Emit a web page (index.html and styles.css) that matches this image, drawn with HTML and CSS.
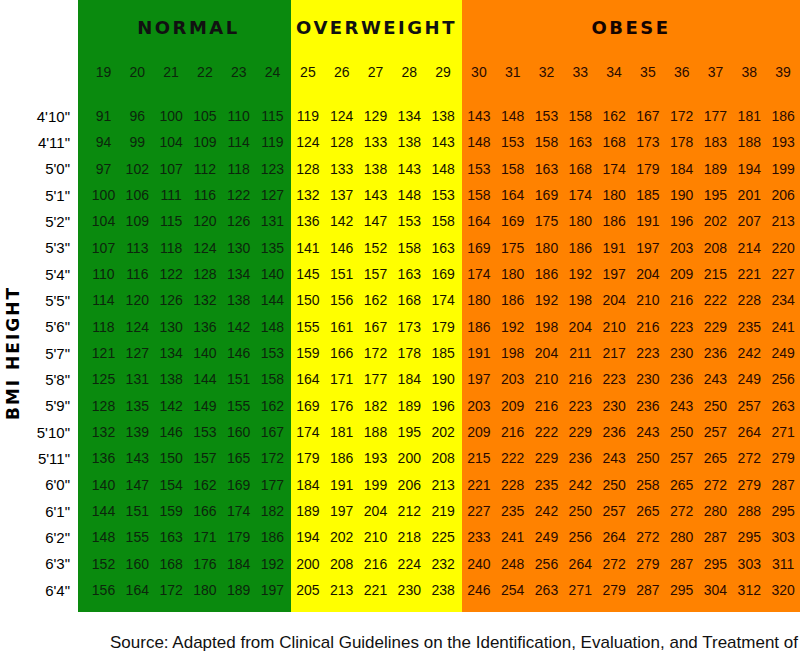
FILE: index.html
```html
<!DOCTYPE html>
<html>
<head>
<meta charset="utf-8">
<link rel="stylesheet" href="styles.css">
</head>
<body>
<div class="chart">
  <div class="side">
    <div class="side-head"></div>
    <div class="side-body">
      <div class="axis"><span>BMI HEIGHT</span></div>
      <div class="heights">
        <div>4'10"</div><div>4'11"</div><div>5'0"</div><div>5'1"</div><div>5'2"</div><div>5'3"</div>
        <div>5'4"</div><div>5'5"</div><div>5'6"</div><div>5'7"</div><div>5'8"</div><div>5'9"</div>
        <div>5'10"</div><div>5'11"</div><div>6'0"</div><div>6'1"</div><div>6'2"</div><div>6'3"</div>
        <div>6'4"</div>
      </div>
    </div>
  </div>

  <div class="block normal">
    <div class="title">NORMAL</div>
    <div class="grid bmi"><span>19</span><span>20</span><span>21</span><span>22</span><span>23</span><span>24</span></div>
    <div class="grid data">
      <span>91</span><span>96</span><span>100</span><span>105</span><span>110</span><span>115</span>
      <span>94</span><span>99</span><span>104</span><span>109</span><span>114</span><span>119</span>
      <span>97</span><span>102</span><span>107</span><span>112</span><span>118</span><span>123</span>
      <span>100</span><span>106</span><span>111</span><span>116</span><span>122</span><span>127</span>
      <span>104</span><span>109</span><span>115</span><span>120</span><span>126</span><span>131</span>
      <span>107</span><span>113</span><span>118</span><span>124</span><span>130</span><span>135</span>
      <span>110</span><span>116</span><span>122</span><span>128</span><span>134</span><span>140</span>
      <span>114</span><span>120</span><span>126</span><span>132</span><span>138</span><span>144</span>
      <span>118</span><span>124</span><span>130</span><span>136</span><span>142</span><span>148</span>
      <span>121</span><span>127</span><span>134</span><span>140</span><span>146</span><span>153</span>
      <span>125</span><span>131</span><span>138</span><span>144</span><span>151</span><span>158</span>
      <span>128</span><span>135</span><span>142</span><span>149</span><span>155</span><span>162</span>
      <span>132</span><span>139</span><span>146</span><span>153</span><span>160</span><span>167</span>
      <span>136</span><span>143</span><span>150</span><span>157</span><span>165</span><span>172</span>
      <span>140</span><span>147</span><span>154</span><span>162</span><span>169</span><span>177</span>
      <span>144</span><span>151</span><span>159</span><span>166</span><span>174</span><span>182</span>
      <span>148</span><span>155</span><span>163</span><span>171</span><span>179</span><span>186</span>
      <span>152</span><span>160</span><span>168</span><span>176</span><span>184</span><span>192</span>
      <span>156</span><span>164</span><span>172</span><span>180</span><span>189</span><span>197</span>
    </div>
  </div>

  <div class="block over">
    <div class="title">OVERWEIGHT</div>
    <div class="grid bmi"><span>25</span><span>26</span><span>27</span><span>28</span><span>29</span></div>
    <div class="grid data">
      <span>119</span><span>124</span><span>129</span><span>134</span><span>138</span>
      <span>124</span><span>128</span><span>133</span><span>138</span><span>143</span>
      <span>128</span><span>133</span><span>138</span><span>143</span><span>148</span>
      <span>132</span><span>137</span><span>143</span><span>148</span><span>153</span>
      <span>136</span><span>142</span><span>147</span><span>153</span><span>158</span>
      <span>141</span><span>146</span><span>152</span><span>158</span><span>163</span>
      <span>145</span><span>151</span><span>157</span><span>163</span><span>169</span>
      <span>150</span><span>156</span><span>162</span><span>168</span><span>174</span>
      <span>155</span><span>161</span><span>167</span><span>173</span><span>179</span>
      <span>159</span><span>166</span><span>172</span><span>178</span><span>185</span>
      <span>164</span><span>171</span><span>177</span><span>184</span><span>190</span>
      <span>169</span><span>176</span><span>182</span><span>189</span><span>196</span>
      <span>174</span><span>181</span><span>188</span><span>195</span><span>202</span>
      <span>179</span><span>186</span><span>193</span><span>200</span><span>208</span>
      <span>184</span><span>191</span><span>199</span><span>206</span><span>213</span>
      <span>189</span><span>197</span><span>204</span><span>212</span><span>219</span>
      <span>194</span><span>202</span><span>210</span><span>218</span><span>225</span>
      <span>200</span><span>208</span><span>216</span><span>224</span><span>232</span>
      <span>205</span><span>213</span><span>221</span><span>230</span><span>238</span>
    </div>
  </div>

  <div class="block obese">
    <div class="title">OBESE</div>
    <div class="grid bmi"><span>30</span><span>31</span><span>32</span><span>33</span><span>34</span><span>35</span><span>36</span><span>37</span><span>38</span><span>39</span></div>
    <div class="grid data">
      <span>143</span><span>148</span><span>153</span><span>158</span><span>162</span><span>167</span><span>172</span><span>177</span><span>181</span><span>186</span>
      <span>148</span><span>153</span><span>158</span><span>163</span><span>168</span><span>173</span><span>178</span><span>183</span><span>188</span><span>193</span>
      <span>153</span><span>158</span><span>163</span><span>168</span><span>174</span><span>179</span><span>184</span><span>189</span><span>194</span><span>199</span>
      <span>158</span><span>164</span><span>169</span><span>174</span><span>180</span><span>185</span><span>190</span><span>195</span><span>201</span><span>206</span>
      <span>164</span><span>169</span><span>175</span><span>180</span><span>186</span><span>191</span><span>196</span><span>202</span><span>207</span><span>213</span>
      <span>169</span><span>175</span><span>180</span><span>186</span><span>191</span><span>197</span><span>203</span><span>208</span><span>214</span><span>220</span>
      <span>174</span><span>180</span><span>186</span><span>192</span><span>197</span><span>204</span><span>209</span><span>215</span><span>221</span><span>227</span>
      <span>180</span><span>186</span><span>192</span><span>198</span><span>204</span><span>210</span><span>216</span><span>222</span><span>228</span><span>234</span>
      <span>186</span><span>192</span><span>198</span><span>204</span><span>210</span><span>216</span><span>223</span><span>229</span><span>235</span><span>241</span>
      <span>191</span><span>198</span><span>204</span><span>211</span><span>217</span><span>223</span><span>230</span><span>236</span><span>242</span><span>249</span>
      <span>197</span><span>203</span><span>210</span><span>216</span><span>223</span><span>230</span><span>236</span><span>243</span><span>249</span><span>256</span>
      <span>203</span><span>209</span><span>216</span><span>223</span><span>230</span><span>236</span><span>243</span><span>250</span><span>257</span><span>263</span>
      <span>209</span><span>216</span><span>222</span><span>229</span><span>236</span><span>243</span><span>250</span><span>257</span><span>264</span><span>271</span>
      <span>215</span><span>222</span><span>229</span><span>236</span><span>243</span><span>250</span><span>257</span><span>265</span><span>272</span><span>279</span>
      <span>221</span><span>228</span><span>235</span><span>242</span><span>250</span><span>258</span><span>265</span><span>272</span><span>279</span><span>287</span>
      <span>227</span><span>235</span><span>242</span><span>250</span><span>257</span><span>265</span><span>272</span><span>280</span><span>288</span><span>295</span>
      <span>233</span><span>241</span><span>249</span><span>256</span><span>264</span><span>272</span><span>280</span><span>287</span><span>295</span><span>303</span>
      <span>240</span><span>248</span><span>256</span><span>264</span><span>272</span><span>279</span><span>287</span><span>295</span><span>303</span><span>311</span>
      <span>246</span><span>254</span><span>263</span><span>271</span><span>279</span><span>287</span><span>295</span><span>304</span><span>312</span><span>320</span>
    </div>
  </div>
</div>
<p class="source">Source: Adapted from Clinical Guidelines on the Identification, Evaluation, and Treatment of</p>
</body>
</html>
```

FILE: styles.css
```css
html, body {
  margin: 0;
  padding: 0;
  background: #ffffff;
}
body {
  width: 800px;
  height: 656px;
  overflow: hidden;
  font-family: "Liberation Sans", Arial, sans-serif;
  color: #000;
}
.chart {
  display: flex;
  height: 612px;
}
.side {
  width: 78px;
  flex-shrink: 0;
  display: flex;
  flex-direction: column;
}
.side-head {
  height: 103px;
  flex-shrink: 0;
}
.side-body {
  display: flex;
}
.axis {
  width: 26px;
  display: flex;
  align-items: center;
  justify-content: center;
}
.axis span {
  writing-mode: vertical-rl;
  transform: rotate(180deg);
  font-family: "DejaVu Sans", sans-serif;
  font-weight: bold;
  font-size: 17px;
  letter-spacing: 2px;
  line-height: 1;
}
.heights {
  width: 44px;
  display: grid;
  grid-auto-rows: 26.33px;
  align-items: center;
  text-align: right;
  font-size: 15px;
}
.block {
  flex-shrink: 0;
  display: flex;
  flex-direction: column;
  box-sizing: border-box;
  height: 612px;
  padding-bottom: 8px;
}
.block > * {
  flex-shrink: 0;
}
.title {
  height: 54px;
  display: flex;
  align-items: center;
  justify-content: center;
  font-family: "DejaVu Sans", sans-serif;
  font-weight: bold;
  font-size: 18px;
  letter-spacing: 2.5px;
  color: #111;
}
.grid {
  display: grid;
  text-align: center;
  font-size: 14px;
}
.grid span {
  display: flex;
  align-items: center;
  justify-content: center;
}
.bmi {
  height: 36px;
  margin-bottom: 13px;
}
.data {
  grid-auto-rows: 26.33px;
}
.normal {
  width: 213px;
  padding-left: 8.6px;
  background: #0a8a0e;
  color: #0c260c;
}
.normal .grid {
  grid-template-columns: repeat(6, 33.8px);
}
.normal .title {
  margin-left: -8.6px;
  padding-left: 8px;
}
.over {
  width: 171px;
  background: #ffff00;
  color: #141100;
}
.over .grid {
  grid-template-columns: repeat(5, 33.8px);
}
.obese {
  width: 338px;
  background: #ff8200;
  color: #2a0a00;
}
.obese .title {
  color: #140400;
}
.obese .grid {
  grid-template-columns: repeat(10, 33.8px);
}
.source {
  margin: 0;
  padding: 21px 0 0 110px;
  font-size: 17px;
  line-height: 20px;
  color: #111;
  white-space: nowrap;
}
```
